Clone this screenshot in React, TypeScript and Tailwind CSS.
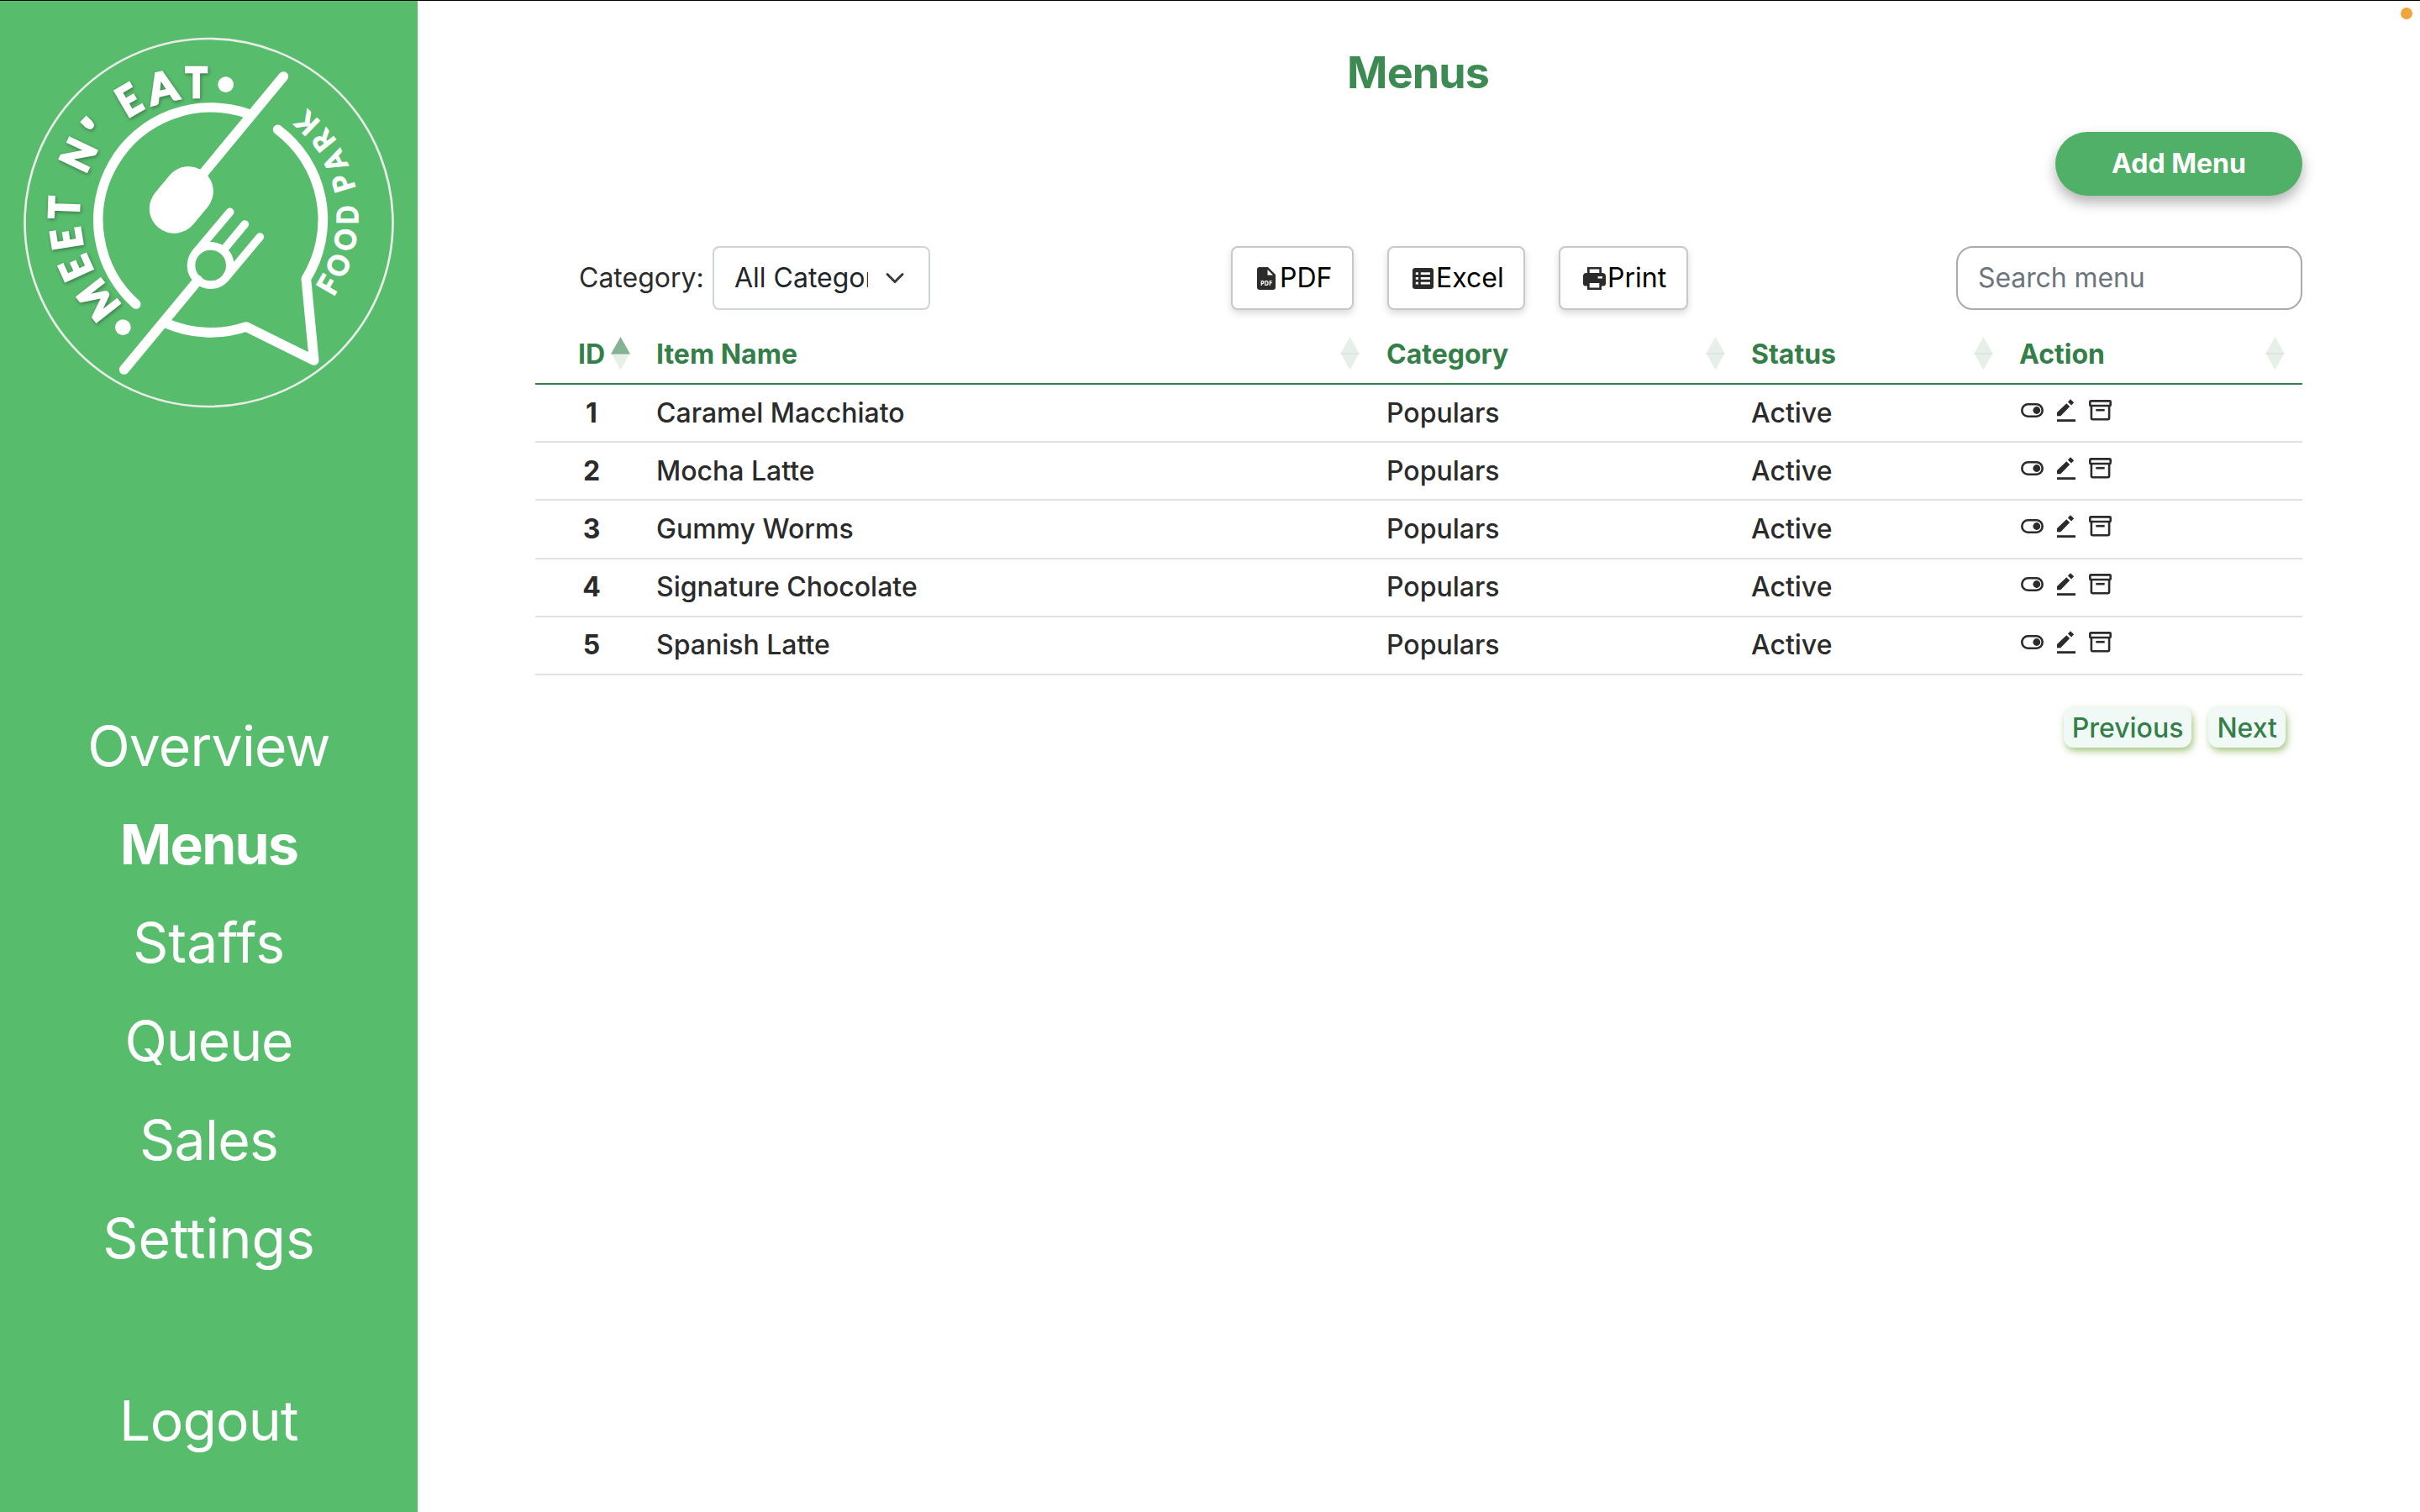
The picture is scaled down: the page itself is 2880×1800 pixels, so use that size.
import React from "react";

const navItems = [
  { label: "Overview", className: "tracking-[-0.8px]" },
  { label: "Menus", className: "font-bold tracking-[-1.7px]" },
  { label: "Staffs", className: "" },
  { label: "Queue", className: "tracking-[-1.1px]" },
  { label: "Sales", className: "tracking-[-0.7px]" },
  { label: "Settings", className: "" },
];

const headers = [
  { label: "Item Name", className: "pr-[16px]" },
  { label: "Category", className: "pr-[15px]" },
  { label: "Status", className: "pr-[15px]" },
  { label: "Action", className: "pr-[21px]" },
];

const items = ["Caramel Macchiato", "Mocha Latte", "Gummy Worms", "Signature Chocolate", "Spanish Latte"];

type Glyph = { c: string; x: number; y: number; r: number; s?: number };

const topLetters: Glyph[] = [
  { c: "M", x: 352, y: 1072, r: -128, s: 0.95 },
  { c: "E", x: 272, y: 958, r: -114.5, s: 0.88 },
  { c: "E", x: 238, y: 853, r: -99, s: 0.88 },
  { c: "T", x: 229, y: 741, r: -88, s: 0.88 },
  { c: "N", x: 280, y: 553, r: -64.5, s: 0.92 },
  { c: "'", x: 339, y: 465, r: -46, s: 1.3 },
  { c: "E", x: 460, y: 358, r: -30, s: 0.88 },
  { c: "A", x: 580, y: 312, r: -13.5 },
  { c: "T", x: 701, y: 294, r: 0, s: 0.88 },
];

const sideLetters: Glyph[] = [
  { c: "F", x: 1173, y: 1018, r: -60 },
  { c: "O", x: 1208, y: 948, r: -70, s: 0.94 },
  { c: "O", x: 1234, y: 856, r: -82, s: 0.94 },
  { c: "D", x: 1241, y: 768, r: -90, s: 0.85 },
  { c: "P", x: 1226, y: 655, r: -107, s: 0.95 },
  { c: "A", x: 1196, y: 576, r: -116, s: 0.95 },
  { c: "R", x: 1155, y: 503, r: -129, s: 0.95 },
  { c: "K", x: 1097, y: 440, r: -136, s: 0.95 },
];

function Logo() {
  return (
    <svg viewBox="0 0 1491 1500" className="block h-[500px] w-[497px]" fill="none" stroke="#fff" strokeLinecap="round" strokeLinejoin="round">
      <circle cx="745.5" cy="795" r="657" stroke="#e9ece9" strokeWidth="8" />
      <g strokeWidth="35">
        <path d="M485 1086A402 402 0 0 1 881 405" />
        <path d="M992 463A402 402 0 0 1 1093 996L1121 1287L879 1167A402 402 0 0 1 590 1153" />
        <path d="M1012 273L725 620" />
        <path d="M443 1320L707 1001" />
      </g>
      <path d="M622 745L673 683" strokeWidth="177" />
      <circle cx="752" cy="948" r="69.5" strokeWidth="29" />
      <path d="M821 757L698 903M874 801L797 894M928 846L805 993" strokeWidth="29" />
      <g fill="#fff" stroke="none">
        <circle cx="806" cy="302" r="28" />
        <circle cx="439" cy="1169" r="28" />
        <g
          className="font-[Lato] text-[149px] font-black [filter:drop-shadow(3px_5px_6px_rgba(0,0,0,0.35))]"
          stroke="#fff"
          strokeWidth="7"
          strokeLinejoin="miter"
        >
          {topLetters.map((g, i) => (
            <text key={i} textAnchor="middle" y="53.5" transform={`translate(${g.x} ${g.y}) rotate(${g.r}) scale(${g.s ?? 1} 1)`}>
              {g.c}
            </text>
          ))}
        </g>
        <g className="font-[Lato] text-[102px] font-bold" stroke="#fff" strokeWidth="4" strokeLinejoin="miter">
          {sideLetters.map((g, i) => (
            <text key={i} textAnchor="middle" y="36.5" transform={`translate(${g.x} ${g.y}) rotate(${g.r}) scale(${g.s ?? 1} 1)`}>
              {g.c}
            </text>
          ))}
        </g>
      </g>
    </svg>
  );
}

function SortIcon({ active = false }: { active?: boolean }) {
  return (
    <svg viewBox="0 0 23 40" className="h-10 w-[23px] shrink-0" fill="#347f48">
      <path d="M11.5 0L23 20.5H0Z" opacity={active ? 0.6 : 0.125} />
      <path d="M0.5 19.5H22.5L11.5 39.5Z" opacity="0.125" />
    </svg>
  );
}

function PdfIcon() {
  return (
    <svg viewBox="0 0 22 27" className="h-[27px] w-[22px]">
      <path d="M3 0H13L22 9V24A3 3 0 0 1 19 27H3A3 3 0 0 1 0 24V3A3 3 0 0 1 3 0Z" fill="#2b2b2b" />
      <path d="M12.5 3V9.5H19Z" fill="#fff" />
      <text x="11" y="21.8" textAnchor="middle" textLength="14" lengthAdjust="spacingAndGlyphs" fill="#fff" className="font-['Open_Sans'] text-[8px] font-bold">PDF</text>
    </svg>
  );
}

function SheetIcon() {
  return (
    <svg viewBox="0 0 25 25" className="h-[25px] w-[25px]">
      <rect width="25" height="25" rx="3.2" fill="#2b2b2b" />
      <path d="M3.8 5.2H7V8H3.8ZM9.8 5.2H21V8H9.8ZM3.8 11H7V13.8H3.8ZM9.8 11H21V13.8H9.8ZM3.8 16.8H7V19.6H3.8ZM9.8 16.8H21V19.6H9.8Z" fill="#fff" />
    </svg>
  );
}

function PrintIcon() {
  return (
    <svg viewBox="0 0 27 27" className="h-[27px] w-[27px]">
      <path d="M5 0H22V7H23A4 4 0 0 1 27 11V19.5A3 3 0 0 1 24 22.5H22V27H5V22.5H3A3 3 0 0 1 0 19.5V11A4 4 0 0 1 4 7H5Z" fill="#2b2b2b" />
      <path d="M7.7 2.6H19.3V7H7.7ZM7.7 19H19.3V24.4H7.7ZM17.6 11H23V13.6H17.6Z" fill="#fff" />
    </svg>
  );
}

function ToggleIcon() {
  return (
    <svg viewBox="0 0 27 17" className="h-[17px] w-[27px]">
      <rect x="1.3" y="1.3" width="24.4" height="14.4" rx="7.2" fill="none" stroke="#2b2b2b" strokeWidth="2.6" />
      <circle cx="18.8" cy="8.5" r="4.4" fill="#2b2b2b" />
    </svg>
  );
}

function EditIcon() {
  return (
    <svg viewBox="0 0 22 27" className="h-[27px] w-[22px]" fill="#2b2b2b">
      <path d="M0 24.2H22V27H0Z" />
      <path d="M11.3 5.2L15.2 9.1L4.3 20.2H0V15.9Z" />
      <path d="M16 0.2L20.2 4.3L17 7.5L12.9 3.4Z" />
    </svg>
  );
}

function ArchiveIcon() {
  return (
    <svg viewBox="0 0 27 25" className="h-[25px] w-[27px]" fill="none" stroke="#2b2b2b" strokeWidth="2.6">
      <rect x="1.3" y="1.4" width="24.4" height="5.6" rx="1" />
      <path d="M2.9 7V21.6A1.6 1.6 0 0 0 4.5 23.2H22.5A1.6 1.6 0 0 0 24.1 21.6V7" />
      <path d="M8.3 12.2H18.7" />
    </svg>
  );
}

function ExportButton({ icon, label, className }: { icon: React.ReactNode; label: string; className: string }) {
  return (
    <button className={`flex h-[76px] items-center rounded-lg border-2 border-[#c8c8c8] bg-white text-black shadow-[0_4px_8px_rgba(0,0,0,0.15)] ${className}`}>
      {icon}
      <span>{label}</span>
    </button>
  );
}

const columns = "grid grid-cols-[128px_869px_434px_319px_353px]";

export default function App() {
  return (
    <div className="flex h-[1800px] w-[2880px] flex-col overflow-hidden bg-white font-[Inter,sans-serif] text-[32px] leading-[48px] text-[#2b2b2b]">
      <div className="h-px shrink-0 bg-black" />
      <div className="flex min-h-0 flex-1">
        <aside className="flex w-[497px] shrink-0 flex-col bg-[#58bc6d] text-white">
          <div className="-mt-px">
            <Logo />
          </div>
          <nav className="mt-[330px] flex flex-col items-center text-[66px] leading-[117.15px]">
            {navItems.map((item) => (
              <a key={item.label} className={item.className}>
                {item.label}
              </a>
            ))}
            <a className="mt-[100px] tracking-[-0.8px]">Logout</a>
          </nav>
        </aside>

        <main className="relative flex-1">
          <span className="absolute top-[8px] right-[9px] size-[14px] rounded-full bg-[#f1a43c]" />
          <h1 className="pt-[50px] pr-[2px] text-center text-[52px] leading-[72px] font-bold tracking-[-0.9px] text-[#3d8b52]">Menus</h1>

          <div className="mr-[140px] ml-[140px]">
            <div className="mt-[34px] flex justify-end">
              <button className="h-[76px] w-[294px] rounded-full bg-[#51b067] font-bold text-white shadow-[0_8px_16px_rgba(0,0,0,0.3)]">
                Add Menu
              </button>
            </div>

            <div className="mt-[60px] flex h-[76px] items-center">
              <span className="ml-[52px] w-[159px]">Category:</span>
              <div className="flex h-[76px] w-[259px] items-center rounded-lg border-2 border-[#ced4da] pr-6 pl-6 text-[#212529]">
                <span className="w-[159px] overflow-hidden whitespace-nowrap">All Categories</span>
                <svg viewBox="0 0 16 16" className="ml-auto mr-1 size-6 shrink-0" fill="none" stroke="#343a40" strokeWidth="2" strokeLinecap="round" strokeLinejoin="round">
                  <path d="m2 5 6 6 6-6" />
                </svg>
              </div>
              <div className="ml-[358px] flex gap-[40px]">
                <ExportButton icon={<PdfIcon />} label="PDF" className="w-[146px] gap-[5px] pl-[29px]" />
                <ExportButton icon={<SheetIcon />} label="Excel" className="w-[164px] gap-[3px] pl-[28px]" />
                <ExportButton icon={<PrintIcon />} label="Print" className="w-[154px] gap-[2px] pl-[27px]" />
              </div>
              <div className="ml-auto flex h-[76px] w-[412px] items-center rounded-[20px] border-2 border-[#aaaaaa] pl-6 tracking-[-0.1px] text-[#6c757d]">
                Search menu
              </div>
            </div>

            <div className="mt-[16px]">
              <div className={`${columns} h-[73px] border-b-2 border-[#347f48] font-bold text-[#347f48]`}>
                <div className="flex items-center pl-[51px]">
                  <span className="w-[39px] pt-[2px]">ID</span>
                  <SortIcon active />
                </div>
                {headers.map((h) => (
                  <div key={h.label} className={`flex items-center justify-between pl-4 ${h.className}`}>
                    <span className="pt-[2px]">{h.label}</span>
                    <SortIcon />
                  </div>
                ))}
              </div>
              {items.map((name, i) => (
                <div key={name} className={`${columns} h-[69.2px] items-center border-b-2 border-[#dee2e6] font-medium ${i < 2 ? "pt-[0.4px]" : "pb-[0.8px]"}`}>
                  <div className="pl-[6px] text-center font-bold">{i + 1}</div>
                  <div className="pl-4">{name}</div>
                  <div className="pl-4">Populars</div>
                  <div className="pl-4">Active</div>
                  <div className="flex items-center gap-4 pb-[6px] pl-[18px]">
                    <ToggleIcon />
                    <EditIcon />
                    <ArchiveIcon />
                  </div>
                </div>
              ))}
            </div>

            <div className="mt-[38px] mr-5 flex justify-end gap-5 font-medium text-[#347f48]">
              {["Previous", "Next"].map((label) => (
                <button key={label} className="h-12 rounded-xl bg-[#f0f9f5] px-[10px] pt-[2px] leading-[46px] shadow-[2px_4px_8px_rgba(90,150,20,0.55)]">
                  {label}
                </button>
              ))}
            </div>
          </div>
        </main>
      </div>
    </div>
  );
}
